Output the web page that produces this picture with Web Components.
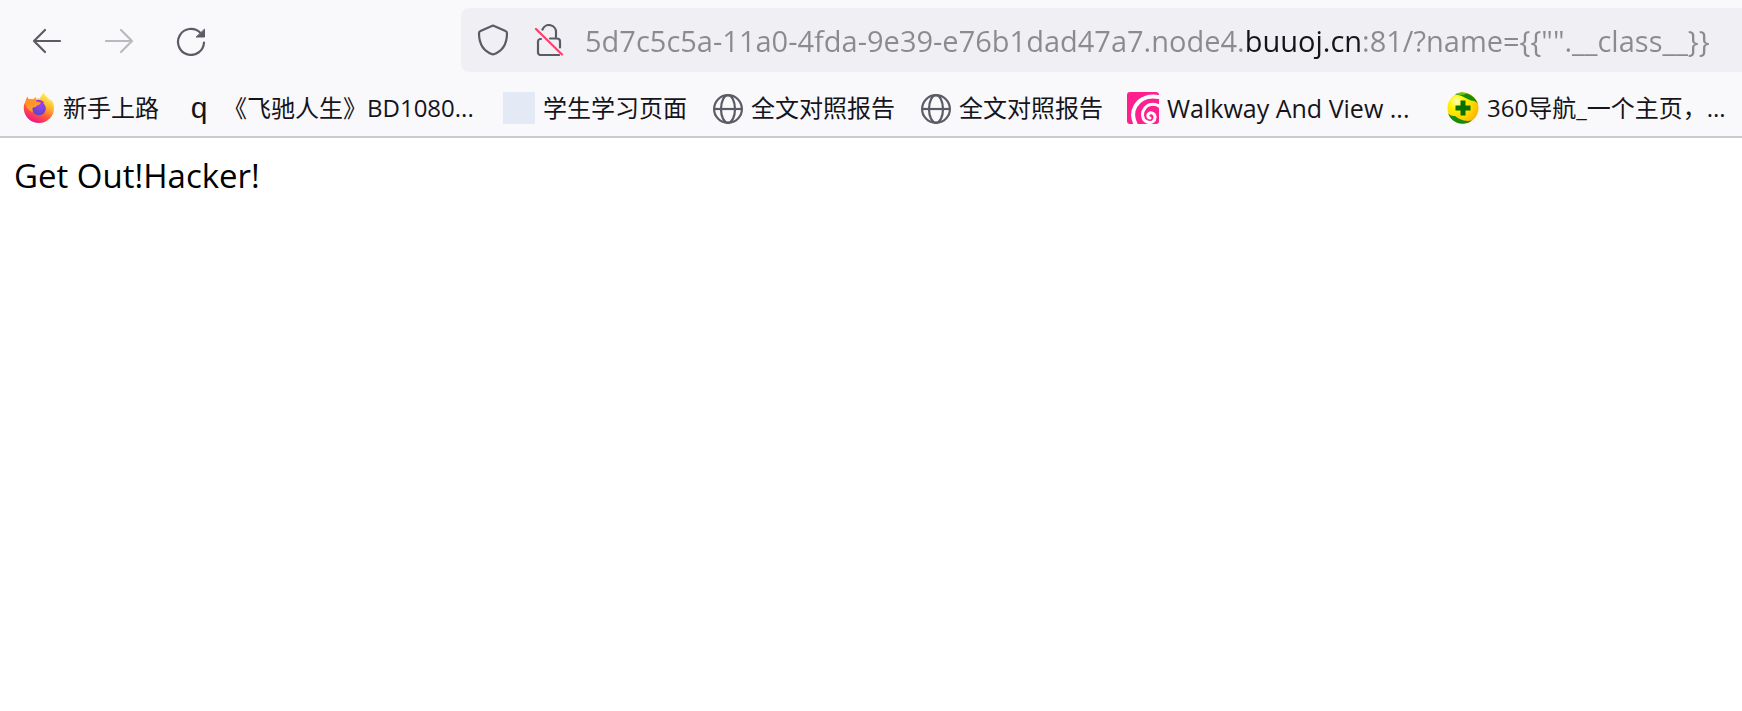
<!DOCTYPE html>
<html lang="zh-CN">
<head>
<meta charset="UTF-8">
<meta name="viewport" content="width=device-width, initial-scale=1">
<title>Browser</title>
<style>
  body {
    margin: 0;
    background: #ffffff;
    --chrome: #f9f9fb;
    --field: #f0f0f4;
    --icon: #5b5b66;
    --text: #15141a;
    --muted: #8a8a8f;
    font-family: "Open Sans", "Noto Sans CJK SC", sans-serif;
    color: var(--text);
  }
</style>
</head>
<body>
<browser-window>
  <nav-toolbar slot="chrome">
    <url-bar value='5d7c5c5a-11a0-4fda-9e39-e76b1dad47a7.node4.buuoj.cn:81/?name={{"".__class__}}' domain="buuoj.cn"></url-bar>
  </nav-toolbar>
  <bookmarks-bar slot="chrome">
    <bookmark-item icon="firefox">新手上路</bookmark-item>
    <bookmark-item icon="letter" clipped>《飞驰人生》BD1080...</bookmark-item>
    <bookmark-item icon="blank">学生学习页面</bookmark-item>
    <bookmark-item icon="globe">全文对照报告</bookmark-item>
    <bookmark-item icon="globe">全文对照报告</bookmark-item>
    <bookmark-item icon="swirl" lang="en" clipped>Walkway And View ...</bookmark-item>
    <bookmark-item icon="plus" clipped>360导航_一个主页，...</bookmark-item>
  </bookmarks-bar>
  <page-content>Get Out!Hacker!</page-content>
</browser-window>

<script>
const FAVICONS = {
  firefox: `
    <svg viewBox="0 0 32 32" aria-hidden="true">
      <defs>
        <linearGradient id="body" x1="0.8" y1="0.1" x2="0.35" y2="1">
          <stop offset="0" stop-color="#fff14a" />
          <stop offset="0.35" stop-color="#ffb52e" />
          <stop offset="0.65" stop-color="#ff5a3c" />
          <stop offset="1" stop-color="#f0108a" />
        </linearGradient>
        <radialGradient id="core" cx="0.6" cy="0.25" r="0.8">
          <stop offset="0" stop-color="#a040f0" />
          <stop offset="1" stop-color="#5148c8" />
        </radialGradient>
        <linearGradient id="head" x1="0" y1="0" x2="0.6" y2="1">
          <stop offset="0" stop-color="#ff8a2a" />
          <stop offset="1" stop-color="#ffa02c" />
        </linearGradient>
      </defs>
      <path d="M20.500 0c-.8 2.500-2.700 4.200-3.600 6.500L5.500 7C4.800 6.500 4.800 5.500 5 4.800 3.500 6 2.600 8 2.300 10 .9 12 .6 14.500.8 17 1.400 25 8 31 16 31s15-6.300 15-14.500c0-4-1.300-7.500-3.800-9.700.3 1 .4 1.900.3 2.700C25.800 5.500 21.600 4.200 20.500 0z" fill="url(#body)" />
      <circle cx="16" cy="16.500" r="6.800" fill="url(#core)" />
      <path d="M11 9.500c2-1.800 6.500-2 8.800-.2 1 .8 1.300 1.700.9 2.200-1.300-.5-2.300-.3-3.200.4z" fill="#9b37e8" />
      <path d="M2.600 10.500C2.900 8 3.500 6 5 4.800c-.1 1.200.2 2 1 2.700 1.500-.4 3.200-.3 4.500.4.300-1.200 1.300-2.400 2.700-3-.7 1.600-.5 3.300.1 4.300 1.200.8 2.700 1 4.600 1-.3 2-2.200 2.800-4.200 3.500-.4 1-1.400 1.600-3 1.600-1.700.5-1.900 2.700-.3 4.700C5.500 19 2.500 15 2.600 10.500z" fill="url(#head)" />
    </svg>`,
  letter: `<span class="letter" aria-hidden="true">q</span>`,
  blank: `<span class="blank"></span>`,
  globe: `
    <svg viewBox="0 0 32 32" fill="none" stroke="#5b5b66" stroke-width="2.200" aria-hidden="true">
      <circle cx="17" cy="17" r="13.900" />
      <ellipse cx="17" cy="17" rx="7" ry="13.900" />
      <path d="M3 17h28" />
    </svg>`,
  swirl: `
    <svg viewBox="0 0 32 32" aria-hidden="true">
      <defs><clipPath id="tile"><rect width="32" height="32" rx="3" /></clipPath></defs>
      <g clip-path="url(#tile)" fill="none" stroke="#ffffff" stroke-linecap="round">
        <rect width="32" height="32" fill="#ff1f8f" stroke="none" />
        <path d="M34 5.500C22 2.500 13 6.500 8.500 14c-3.500 6-3 13 1 20" stroke-width="4" />
        <path d="M34 16c-4-5-12-5-16 0-4 5-3 12 2 14 4.500 1.800 8.500-1 8-5.500-.4-3.500-4.500-4.800-6.500-2.500-1.300 1.800-.4 3.800 1.500 4" stroke-width="3" />
      </g>
    </svg>`,
  plus: `
    <svg viewBox="0 0 32 32" aria-hidden="true">
      <defs>
        <radialGradient id="ball" cx="0.3" cy="0.3" r="0.8">
          <stop offset="0" stop-color="#ffffc8" />
          <stop offset="0.3" stop-color="#fff500" />
          <stop offset="0.7" stop-color="#ffd200" />
          <stop offset="1" stop-color="#ffb000" />
        </radialGradient>
      </defs>
      <circle cx="16" cy="16" r="15.500" fill="url(#ball)" />
      <path d="M8 2.500C17-2 27 2 31 12c-2-3-4.500-3.500-7-3.500C20 7 14 2.500 8 2.500z" fill="#168a0a" />
      <path d="M8 2.500C12 0 17 0 21 1.500c-3 1.500-6 1.500-8 1.500z" fill="#6dbb1c" />
      <path d="M1 21c2 3 5 3 7 3 4 3 9 6 17 4.500C16 35 4 31 1 21z" fill="#168a0a" />
      <path d="M13.500 8.500h5v5h5v5h-5v5h-5v-5h-5v-5h5z" fill="#0b6e00" />
    </svg>`
};

class BrowserWindow extends HTMLElement {
  constructor() {
    super();
    this.attachShadow({ mode: 'open' });
  }

  connectedCallback() {
    this.shadowRoot.innerHTML = `
      <style>
        :host {
          display: flex;
          flex-direction: column;
          min-height: 100vh;
          overflow: hidden;
        }

        header {
          background: var(--chrome);
          border-bottom: 2px solid #cccccc;
        }
      </style>
      <header><slot name="chrome"></slot></header>
      <main><slot></slot></main>
    `;
  }
}

class NavToolbar extends HTMLElement {
  constructor() {
    super();
    this.attachShadow({ mode: 'open' });
  }

  connectedCallback() {
    this.shadowRoot.innerHTML = `
      <style>
        :host {
          display: flex;
          align-items: center;
          padding: 8px 0 8px 15px;
        }

        .nav {
          display: flex;
          gap: 8px;
          margin-right: 238px;
        }

        button {
          display: flex;
          align-items: center;
          justify-content: center;
          width: 64px;
          height: 64px;
          padding: 0;
          border: none;
          border-radius: 8px;
          background: none;
          color: var(--icon);
        }

        button:disabled {
          opacity: 0.4;
        }

        svg {
          width: 32px;
          height: 32px;
          fill: none;
          stroke: currentColor;
          stroke-width: 2.200;
          stroke-linecap: round;
          stroke-linejoin: round;
        }

        ::slotted(url-bar) {
          flex: 1;
          min-width: 0;
        }
      </style>
      <div class="nav">
        <button type="button" aria-label="Back">
          <svg viewBox="0 0 32 32"><path d="M14 6 3 17l11 11M3 17h26" /></svg>
        </button>
        <button type="button" aria-label="Forward" disabled>
          <svg viewBox="0 0 32 32"><path d="M18 6l11 11-11 11M29 17H3" /></svg>
        </button>
        <button type="button" aria-label="Reload">
          <svg viewBox="0 0 32 32">
            <path d="M29 18.500A13 13 0 1 1 25 8.500" />
            <path d="M29.500 5.500v7.500h-8z" fill="currentColor" stroke-width="1" />
          </svg>
        </button>
      </div>
      <slot></slot>
    `;
  }
}

class UrlBar extends HTMLElement {
  constructor() {
    super();
    this.attachShadow({ mode: 'open' });
  }

  connectedCallback() {
    this.render();
    this.input = this.shadowRoot.querySelector('input');
    this.input.value = this.getAttribute('value');
    this.input.addEventListener('input', () => this.highlightDomain());
    this.highlightDomain();
  }

  render() {
    this.shadowRoot.innerHTML = `
      <style>
        :host {
          display: flex;
          align-items: center;
          height: 64px;
          padding-left: 4px;
          box-sizing: border-box;
          background: var(--field);
          border-radius: 8px 0 0 8px;
        }

        button {
          display: flex;
          align-items: center;
          justify-content: center;
          flex-shrink: 0;
          width: 56px;
          height: 56px;
          padding: 0;
          border: none;
          background: none;
          color: var(--icon);
        }

        svg {
          width: 32px;
          height: 32px;
          fill: none;
          stroke: currentColor;
          stroke-width: 2.200;
          stroke-linecap: round;
          stroke-linejoin: round;
        }

        input {
          flex: 1;
          min-width: 0;
          height: 64px;
          margin-left: 8px;
          padding: 0;
          border: none;
          outline: none;
          font-family: inherit;
          font-size: 29px;
          color: var(--muted);
          caret-color: var(--text);
          background: linear-gradient(to right,
            var(--muted) var(--from, 0), var(--text) var(--from, 0),
            var(--text) var(--to, 0), var(--muted) var(--to, 0));
          -webkit-background-clip: text;
          background-clip: text;
          -webkit-text-fill-color: transparent;
        }
      </style>
      <button type="button" aria-label="Tracking protection">
        <svg viewBox="0 0 32 32">
          <path d="M16 1.500 28.500 7c1 .4 1.500 1.200 1.500 2.200C30 20 25 27.500 16 30.500 7 27.500 2 20 2 9.200c0-1 .5-1.800 1.500-2.200z" />
        </svg>
      </button>
      <button type="button" aria-label="Connection is not secure">
        <svg viewBox="0 0 32 32">
          <path d="M9.500 5.500a7 7 0 0 1 13.500 3v6h1a3 3 0 0 1 3 3v6M17 14.500h6M8 15H7.500a2.500 2.500 0 0 0-2.500 2.500v11a2.500 2.500 0 0 0 2.500 2.500H26" />
          <path d="M3 5l26 25.500" stroke="#ff3d6a" />
        </svg>
      </button>
      <input type="text" aria-label="Address" spellcheck="false" autocomplete="off">
    `;
  }

  // The registrable domain is painted darker than the rest of the address.
  highlightDomain() {
    const value = this.input.value;
    const domain = this.getAttribute('domain');
    const start = value.indexOf(domain);
    const ctx = document.createElement('canvas').getContext('2d');
    ctx.font = getComputedStyle(this.input).font;
    const from = start < 0 ? 0 : ctx.measureText(value.slice(0, start)).width;
    const to = start < 0 ? 0 : ctx.measureText(value.slice(0, start + domain.length)).width;
    this.input.style.setProperty('--from', `${Math.round(from)}px`);
    this.input.style.setProperty('--to', `${Math.round(to)}px`);
  }
}

class BookmarksBar extends HTMLElement {
  constructor() {
    super();
    this.attachShadow({ mode: 'open' });
  }

  connectedCallback() {
    this.shadowRoot.innerHTML = `
      <style>
        :host {
          display: block;
        }

        nav {
          display: flex;
          align-items: center;
          height: 56px;
          padding-left: 11px;
        }
      </style>
      <nav aria-label="Bookmarks"><slot></slot></nav>
    `;
  }
}

class BookmarkItem extends HTMLElement {
  constructor() {
    super();
    this.attachShadow({ mode: 'open' });
  }

  connectedCallback() {
    this.shadowRoot.innerHTML = `
      <style>
        :host {
          display: block;
          flex-shrink: 0;
          font-size: 24px;
        }

        :host(:lang(en)) {
          font-size: 25px;
        }

        a {
          display: flex;
          align-items: center;
          gap: 8px;
          padding: 0 12px;
          color: inherit;
          text-decoration: none;
          line-height: 32px;
          white-space: nowrap;
        }

        .icon {
          display: flex;
          flex-shrink: 0;
          align-items: center;
          justify-content: center;
          width: 32px;
          height: 32px;
        }

        .icon svg {
          width: 32px;
          height: 32px;
        }

        .blank {
          width: 32px;
          height: 32px;
          background: #e3eaf6;
        }

        .letter {
          font-family: "Liberation Sans", sans-serif;
          font-size: 30px;
          line-height: 32px;
        }

        :host([clipped]) .label {
          width: 256px;
          overflow: hidden;
        }
      </style>
      <a href="#">
        <span class="icon">${FAVICONS[this.getAttribute('icon')]}</span>
        <span class="label"><slot></slot></span>
      </a>
    `;
  }
}

class PageContent extends HTMLElement {
  constructor() {
    super();
    this.attachShadow({ mode: 'open' });
  }

  connectedCallback() {
    this.shadowRoot.innerHTML = `
      <style>
        :host {
          display: block;
          padding: 16px 14px;
          font-size: 33px;
          line-height: 44px;
          color: #000000;
        }
      </style>
      <slot></slot>
    `;
  }
}

customElements.define('browser-window', BrowserWindow);
customElements.define('nav-toolbar', NavToolbar);
customElements.define('url-bar', UrlBar);
customElements.define('bookmarks-bar', BookmarksBar);
customElements.define('bookmark-item', BookmarkItem);
customElements.define('page-content', PageContent);
</script>
</body>
</html>
